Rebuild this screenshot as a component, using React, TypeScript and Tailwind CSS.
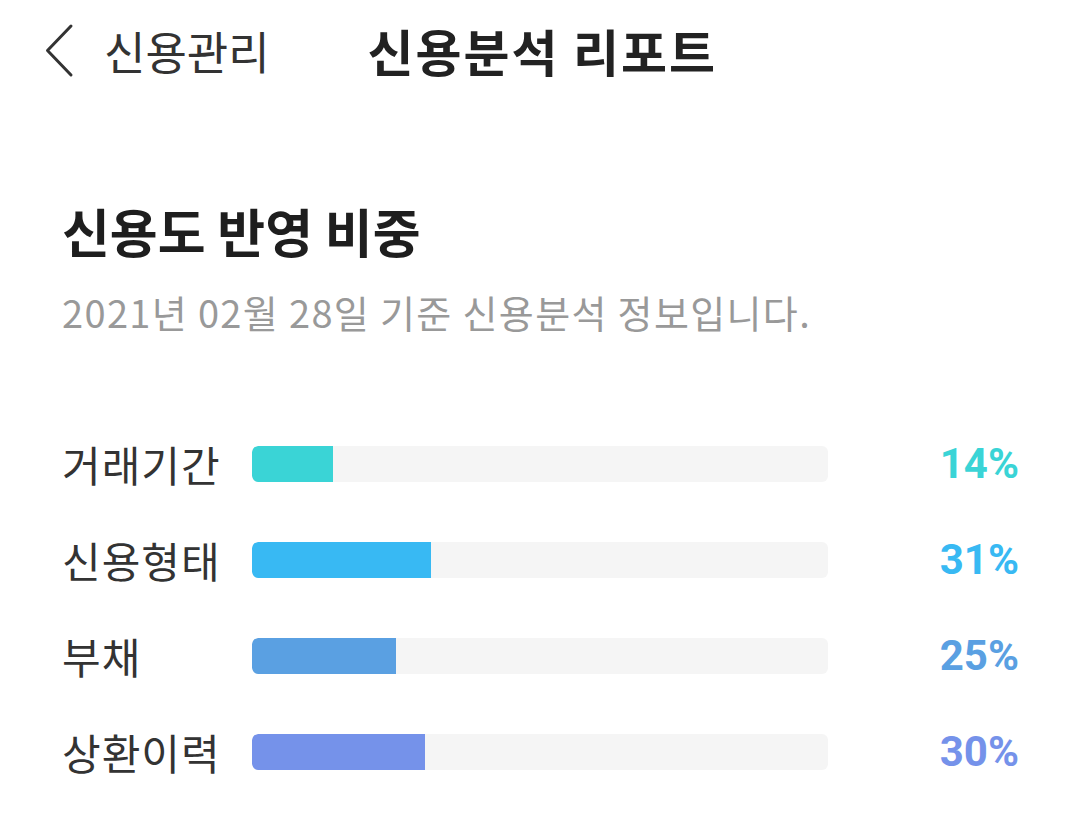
import React from "react";

const items = [
  { label: "거래기간", value: 14, bar: "bg-[#3ad4d6]", text: "text-[#3ad4d6]" },
  { label: "신용형태", value: 31, bar: "bg-[#38b9f3]", text: "text-[#38b9f3]" },
  { label: "부채", value: 25, bar: "bg-[#5aa0e2]", text: "text-[#5aa0e2]" },
  { label: "상환이력", value: 30, bar: "bg-[#7592ea]", text: "text-[#7592ea]" },
];

export default function App() {
  return (
    <div
      className="w-[1080px] h-[826px] bg-white text-[#222] overflow-hidden"
      style={{ fontFamily: '"Noto Sans CJK KR", "Noto Sans", sans-serif' }}
    >
      {/* header */}
      <header className="h-[100px] flex items-center pl-[44px]">
        <svg width="30" height="56" viewBox="0 0 30 56" fill="none" className="shrink-0">
          <path d="M27 4 L3.5 28.5 L27 53" stroke="#333" strokeWidth="3" strokeLinecap="round" strokeLinejoin="round" />
        </svg>
        <span className="ml-[30px] text-[45px] leading-none text-[#333]">신용관리</span>
        <h1 className="ml-[98px] text-[50px] leading-none font-bold tracking-[2px] text-[#222]">
          신용분석 리포트
        </h1>
      </header>

      <main className="px-[62px] pr-[61px]">
        <h2 className="mt-[101px] text-[52px] leading-[60px] font-bold text-[#1e1e1e]">
          신용도 반영 비중
        </h2>
        <p className="mt-[29px] text-[38px] leading-[44px] tracking-[1.35px] text-[#999]">
          2021년 02월 28일 기준 신용분석 정보입니다.
        </p>

        <ul className="mt-[112px] flex flex-col gap-[60px]">
          {items.map((it) => (
            <li key={it.label} className="flex items-center h-[36px]">
              <span className="w-[190px] text-[42px] leading-none tracking-[1px] text-[#333]">
                {it.label}
              </span>
              <div className="w-[576px] h-[36px] rounded-[6px] bg-[#f5f5f5] overflow-hidden">
                <div className={`h-full ${it.bar} rounded-l-[6px]`} style={{ width: `${it.value}%` }} />
              </div>
              <span
                className={`flex-1 text-right text-[42px] leading-none font-bold ${it.text}`}
                style={{ fontFamily: "Roboto, sans-serif" }}
              >
                {it.value}%
              </span>
            </li>
          ))}
        </ul>
      </main>
    </div>
  );
}
